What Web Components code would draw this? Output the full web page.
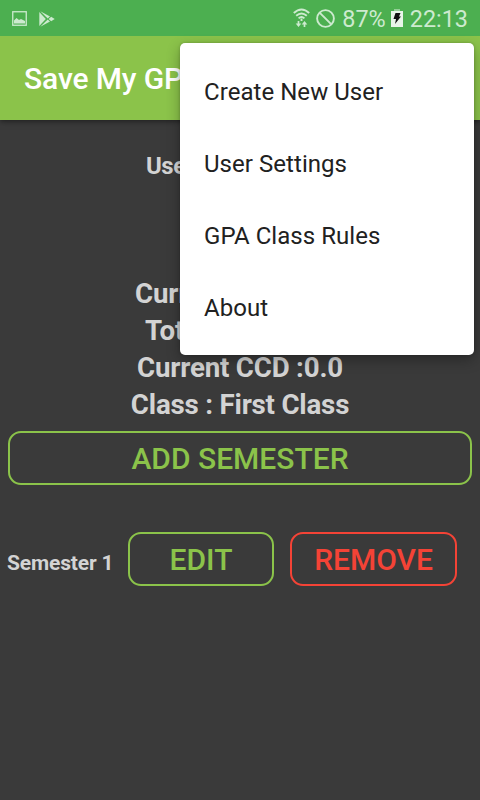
<!DOCTYPE html>
<html lang="en">
<head>
<meta charset="utf-8">
<title>Save My GPA</title>
<style>
    body {
        margin: 0;
        width: 480px;
        height: 800px;
        overflow: hidden;
        background-color: #3a3a3a;
        font-family: Roboto, "Noto Sans", sans-serif;
    }
</style>
</head>
<body>
<gpa-app></gpa-app>
<script>
class StatusBar extends HTMLElement {
    constructor() {
        super();
        this.attachShadow({ mode: 'open' });
        this.shadowRoot.innerHTML = `
            <style>
                :host {
                    display: flex;
                    align-items: center;
                    position: relative;
                    z-index: 1;
                    height: 36px;
                    box-sizing: border-box;
                    padding: 0 12px;
                    background-color: #4caf50;
                    color: #cdeacf;
                    font-size: 23.4px;
                    line-height: 36px;
                }
                svg { display: block; flex: none; }
                span { padding-top: 2px; white-space: nowrap; }
                .image { margin: 1px 12px 0 0; }
                .play { margin: 1px auto 0 0; }
                .wifi { margin-right: 6px; }
                .block { margin-right: 7px; }
                .battery { margin: 0 7px 0 5px; }
            </style>
            <svg class="image" width="15" height="15" viewBox="0 0 15 15">
                <rect x=".75" y=".75" width="13.5" height="13.5" fill="none" stroke="#cdeacf" stroke-width="1.3"/>
                <path d="M2 12.5V9.5L4.5 7L7 9L9 8L13 10V12.5Z" fill="#cdeacf"/>
            </svg>
            <svg class="play" width="16" height="16" viewBox="0 0 16 16" fill="#cdeacf">
                <path d="M.3 1L6.8 8L.3 15Z"/>
                <path d="M1.3.3L11 5.5L8.7 7.4Z"/>
                <path d="M1.3 15.7L11 10.5L8.7 8.6Z"/>
                <path d="M9.6 8L12.2 5.8L15.7 8L12.2 10.2Z"/>
            </svg>
            <svg class="wifi" width="17" height="20" viewBox="0 0 17 20" fill="none" stroke="#cdeacf" stroke-width="1.9">
                <path d="M.8 5Q8.5-2.2 16.2 5M3.2 7.8Q8.5 3 13.8 7.8M5.6 10.4Q8.5 7.8 11.4 10.4"/>
                <path d="M8.5 10.5v2.5" />
                <path d="M5.5 13v4M11.5 19v-4" stroke-width="1.7"/>
                <path d="M2.7 15.4h5.6L5.5 19ZM8.7 16.6h5.6L11.5 13Z" fill="#cdeacf" stroke="none"/>
            </svg>
            <svg class="block" width="19" height="19" viewBox="0 0 19 19" fill="none" stroke="#cdeacf" stroke-width="1.9">
                <circle cx="9.5" cy="9.5" r="8.4"/>
                <path d="M3.6 3.6L15.4 15.4"/>
            </svg>
            <span>87%</span>
            <svg class="battery" width="12" height="18" viewBox="0 0 12 18">
                <path d="M0 2h12v16H0Z" fill="#e8f5e9"/>
                <path d="M3 0h6v2H3Z" fill="#94cf97"/>
                <path d="M4.5 4H9.5L8 7.5H10L4 15L5 10H2.5Z" fill="#111"/>
            </svg>
            <span>22:13</span>
        `;
    }
}

class AppBar extends HTMLElement {
    constructor() {
        super();
        this.attachShadow({ mode: 'open' });
        this.shadowRoot.innerHTML = `
            <style>
                :host {
                    display: flex;
                    align-items: center;
                    height: 84px;
                    box-sizing: border-box;
                    padding: 0 24px;
                    background-color: #8bc34a;
                    box-shadow: 0 1px 6px rgba(0,0,0,0.55);
                    color: #fff;
                    font-size: 30px;
                    font-weight: 500;
                    letter-spacing: -0.12px;
                    white-space: nowrap;
                }
            </style>
            <slot></slot>
        `;
    }
}

class OutlineButton extends HTMLElement {
    constructor() {
        super();
        this.attachShadow({ mode: 'open' });
        this.shadowRoot.innerHTML = `
            <style>
                :host { display: block; color: #8bc34a; }
                :host([danger]) { color: #f44336; }
                button {
                    display: block;
                    width: 100%;
                    height: 54px;
                    padding: 1px 0 0;
                    border: 2px solid currentColor;
                    border-radius: 13px;
                    background: none;
                    color: inherit;
                    font-family: inherit;
                    font-size: 30px;
                    font-weight: 500;
                    text-transform: uppercase;
                    white-space: nowrap;
                }
            </style>
            <button><slot></slot></button>
        `;
    }
}

class GpaSummary extends HTMLElement {
    constructor() {
        super();
        this.attachShadow({ mode: 'open' });
        this.shadowRoot.innerHTML = `
            <style>
                :host {
                    display: block;
                    padding-top: 30px;
                    color: #d3d3d3;
                    font-weight: 700;
                    text-align: center;
                }
                .user {
                    height: 125px;
                    padding-left: 146px;
                    font-size: 24px;
                    line-height: 32px;
                    letter-spacing: -0.5px;
                    text-align: left;
                }
                .row {
                    font-size: 27.7px;
                    line-height: 37px;
                    letter-spacing: -0.2px;
                }
                .gpa { padding-left: 135px; text-align: left; }
                .total { padding-left: 145px; text-align: left; }
            </style>
            <div class="user">Use</div>
            <div class="row gpa">Curr</div>
            <div class="row total">Tot</div>
            <div class="row">Current CCD :0.0</div>
            <div class="row">Class : First Class</div>
        `;
    }
}

class SemesterRow extends HTMLElement {
    constructor() {
        super();
        this.attachShadow({ mode: 'open' });
        this.shadowRoot.innerHTML = `
            <style>
                :host {
                    display: grid;
                    grid-template-columns: 105px 146px 167px;
                    column-gap: 16px;
                    align-items: center;
                    padding-left: 7px;
                }
                .name {
                    padding-top: 7px;
                    color: #d3d3d3;
                    font-size: 21px;
                    font-weight: 700;
                    letter-spacing: -0.15px;
                    white-space: nowrap;
                }
            </style>
            <div class="name"><slot></slot></div>
            <outline-button>Edit</outline-button>
            <outline-button danger>Remove</outline-button>
        `;
    }
}

class OverflowMenu extends HTMLElement {
    constructor() {
        super();
        this.attachShadow({ mode: 'open' });
        this.shadowRoot.innerHTML = `
            <style>
                :host {
                    display: block;
                    width: 294px;
                    height: 312px;
                    box-sizing: border-box;
                    padding: 13px 0 11px;
                    border-radius: 5px;
                    background-color: #fff;
                    box-shadow: 0 5px 14px rgba(0,0,0,0.3), 0 0 3px rgba(0,0,0,0.2);
                }
            </style>
            <slot></slot>
        `;
    }
}

class MenuItem extends HTMLElement {
    constructor() {
        super();
        this.attachShadow({ mode: 'open' });
        this.shadowRoot.innerHTML = `
            <style>
                :host {
                    display: flex;
                    align-items: center;
                    height: 72px;
                    padding-left: 24px;
                    color: #212121;
                    font-size: 24px;
                    letter-spacing: 0.05px;
                }
            </style>
            <slot></slot>
        `;
    }
}

class GpaApp extends HTMLElement {
    constructor() {
        super();
        this.attachShadow({ mode: 'open' });
        this.shadowRoot.innerHTML = `
            <style>
                :host {
                    display: block;
                    position: relative;
                    height: 800px;
                }
                .add { margin: 8px 8px 47px; }
                /* the menu floats over the page */
                overflow-menu {
                    position: absolute;
                    z-index: 2;
                    top: 43px;
                    right: 6px;
                }
            </style>
            <status-bar></status-bar>
            <app-bar>Save My GP</app-bar>
            <gpa-summary></gpa-summary>
            <outline-button class="add">Add Semester</outline-button>
            <semester-row>Semester 1</semester-row>
            <overflow-menu>
                <menu-item>Create New User</menu-item>
                <menu-item>User Settings</menu-item>
                <menu-item>GPA Class Rules</menu-item>
                <menu-item>About</menu-item>
            </overflow-menu>
        `;
    }
}

customElements.define('status-bar', StatusBar);
customElements.define('app-bar', AppBar);
customElements.define('outline-button', OutlineButton);
customElements.define('gpa-summary', GpaSummary);
customElements.define('semester-row', SemesterRow);
customElements.define('overflow-menu', OverflowMenu);
customElements.define('menu-item', MenuItem);
customElements.define('gpa-app', GpaApp);
</script>
</body>
</html>
